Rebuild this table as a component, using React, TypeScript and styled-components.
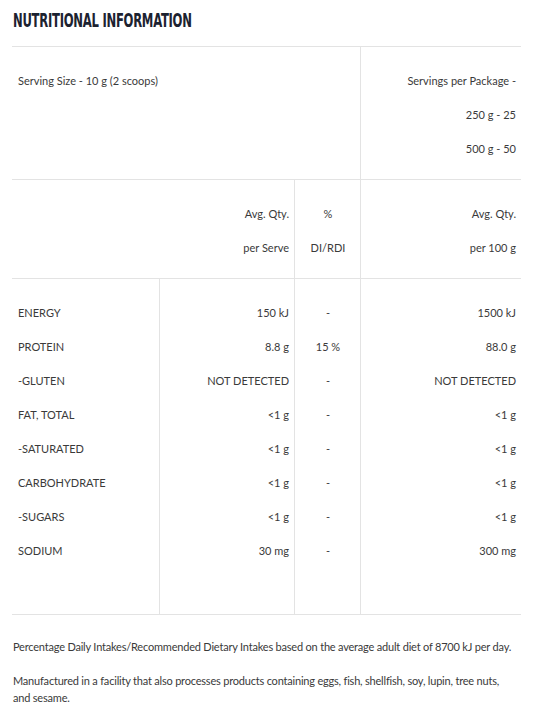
import React from "react";
import styled, { createGlobalStyle } from "styled-components";

const GlobalStyle = createGlobalStyle`
  body {
    margin: 0;
    background: #ffffff;
    font-family: Lato, "Open Sans", sans-serif;
    color: #3a3a3a;
  }
`;

const Page = styled.div`
  width: 509px;
  padding: 0 18px 0 12px;
`;

const Title = styled.h2`
  margin: 8px 0 14px 1px;
  font-family: "DejaVu Sans Condensed", "DejaVu Sans", sans-serif;
  font-weight: 700;
  font-size: 19px;
  line-height: 24px;
  letter-spacing: -0.4px;
  color: #1c2230;
  white-space: nowrap;
  transform: scaleX(0.68);
  transform-origin: left center;
`;

const Table = styled.div`
  border-bottom: 1px solid #e3e3e3;
`;

const Section = styled.div<{ $cols: string; $bottom: number }>`
  display: grid;
  grid-template-columns: ${({ $cols }) => $cols};
  border-top: 1px solid #e3e3e3;

  & > div {
    padding-top: 17px;
    padding-bottom: ${({ $bottom }) => $bottom}px;
  }
`;

const Cell = styled.div<{ $align?: "left" | "right" | "center" }>`
  text-align: ${({ $align }) => $align || "left"};
  padding-left: 6px;
  padding-right: 5px;
  font-size: 11px;

  & + & {
    border-left: 1px solid #e3e3e3;
  }
`;

const Line = styled.div`
  height: 34px;
  line-height: 34px;
  white-space: nowrap;
`;

const Notes = styled.div`
  padding: 23px 0 0 1px;
`;

const Note = styled.p`
  margin: 0 0 17px;
  max-width: 502px;
  font-size: 11px;
  line-height: 17px;
  letter-spacing: -0.2px;
`;

interface Nutrient {
  name: string;
  serve: string;
  di: string;
  per100: string;
}

const nutrients: Nutrient[] = [
  { name: "ENERGY", serve: "150 kJ", di: "-", per100: "1500 kJ" },
  { name: "PROTEIN", serve: "8.8 g", di: "15 %", per100: "88.0 g" },
  { name: "-GLUTEN", serve: "NOT DETECTED", di: "-", per100: "NOT DETECTED" },
  { name: "FAT, TOTAL", serve: "<1 g", di: "-", per100: "<1 g" },
  { name: "-SATURATED", serve: "<1 g", di: "-", per100: "<1 g" },
  { name: "CARBOHYDRATE", serve: "<1 g", di: "-", per100: "<1 g" },
  { name: "-SUGARS", serve: "<1 g", di: "-", per100: "<1 g" },
  { name: "SODIUM", serve: "30 mg", di: "-", per100: "300 mg" },
];

const App: React.FC = () => {
  return (
    <Page>
      <GlobalStyle />
      <Title>NUTRITIONAL INFORMATION</Title>
      <Table>
        <Section $cols="348px 161px" $bottom={13}>
          <Cell>
            <Line>Serving Size - 10 g (2 scoops)</Line>
          </Cell>
          <Cell $align="right">
            <Line>Servings per Package -</Line>
            <Line>250 g - 25</Line>
            <Line>500 g - 50</Line>
          </Cell>
        </Section>

        <Section $cols="282px 66px 161px" $bottom={13}>
          <Cell $align="right">
            <Line>Avg. Qty.</Line>
            <Line>per Serve</Line>
          </Cell>
          <Cell $align="center">
            <Line>%</Line>
            <Line>DI/RDI</Line>
          </Cell>
          <Cell $align="right">
            <Line>Avg. Qty.</Line>
            <Line>per 100 g</Line>
          </Cell>
        </Section>

        <Section $cols="147px 135px 66px 161px" $bottom={46}>
          <Cell>
            {nutrients.map((n) => (
              <Line key={n.name}>{n.name}</Line>
            ))}
          </Cell>
          <Cell $align="right">
            {nutrients.map((n) => (
              <Line key={n.name}>{n.serve}</Line>
            ))}
          </Cell>
          <Cell $align="center">
            {nutrients.map((n) => (
              <Line key={n.name}>{n.di}</Line>
            ))}
          </Cell>
          <Cell $align="right">
            {nutrients.map((n) => (
              <Line key={n.name}>{n.per100}</Line>
            ))}
          </Cell>
        </Section>
      </Table>

      <Notes>
        <Note>
          Percentage Daily Intakes/Recommended Dietary Intakes based on the
          average adult diet of 8700 kJ per day.
        </Note>
        <Note>
          Manufactured in a facility that also processes products containing
          eggs, fish, shellfish, soy, lupin, tree nuts, and sesame.
        </Note>
      </Notes>
    </Page>
  );
};

export default App;
